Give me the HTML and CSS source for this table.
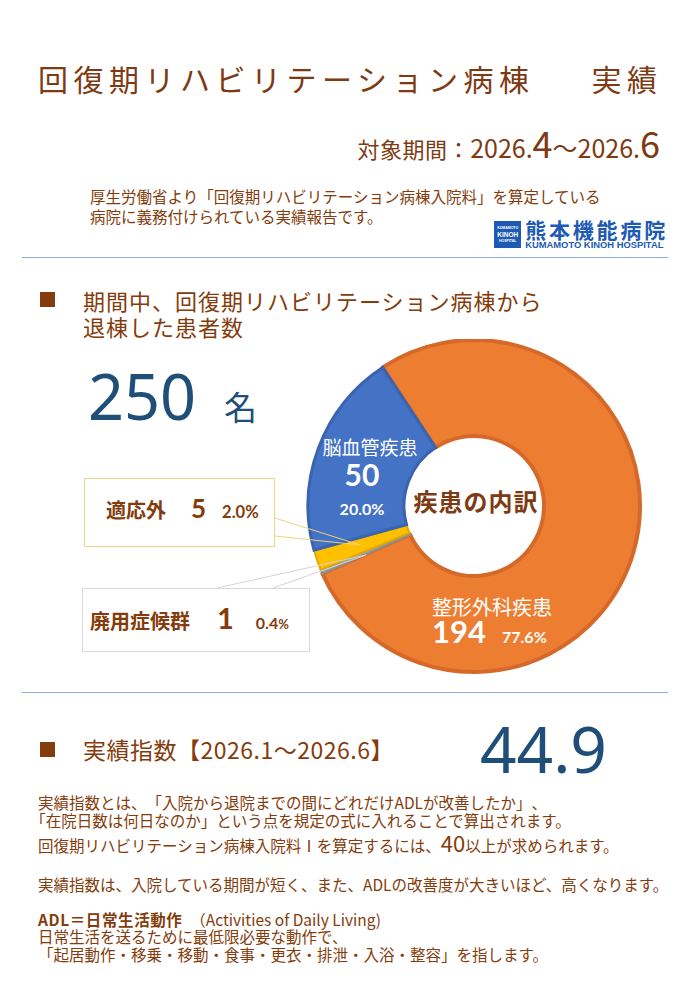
FILE: index.html
```html
<!DOCTYPE html>
<html lang="ja">
<head>
<meta charset="utf-8">
<title>回復期リハビリテーション病棟 実績</title>
<link rel="stylesheet" href="styles.css">
</head>
<body>
<div class="page">
  <header class="header">
    <h1 class="title">回復期リハビリテーション病棟<span class="title-gap"></span>実績</h1>
    <p class="period">対象期間：<span class="num">2026.</span><span class="big">4</span><span class="num">～2026.</span><span class="big">6</span></p>
    <p class="intro">厚生労働省より「回復期リハビリテーション病棟入院料」を算定している<br>病院に義務付けられている実績報告です。</p>
    <div class="logo-row">
      <div class="logo">
        <div class="logo-mark"><span class="lm-s">KUMAMOTO</span><span class="lm-b">KINOH</span><span class="lm-s">HOSPITAL</span></div>
        <div class="logo-text"><span class="logo-jp">熊本機能病院</span><span class="logo-en">KUMAMOTO KINOH HOSPITAL</span></div>
      </div>
    </div>
  </header>

  <div class="rule"></div>

  <section class="sec1">
    <h2 class="sec-head"><span class="bullet"></span><span class="sec-text">期間中、回復期リハビリテーション病棟から<br>退棟した患者数</span></h2>
    <div class="chart">
      <p class="total"><span class="total-num">250</span><span class="total-unit">名</span></p>
      <svg class="donut" width="692" height="352" viewBox="0 0 692 352" xmlns="http://www.w3.org/2000/svg">
        <path class="s-orange" d="M382.6,28.4 A166,166 0 1 1 322.4,234.6 L410.1,195.5 A70,70 0 1 0 435.5,108.6 Z"/>
        <path class="s-gray" d="M322.4,234.6 A166,166 0 0 1 320.7,230.8 L409.4,193.9 A70,70 0 0 0 410.1,195.5 Z"/>
        <path class="s-yellow" d="M320.7,230.8 A166,166 0 0 1 314.0,211.1 L406.5,185.6 A70,70 0 0 0 409.4,193.9 Z"/>
        <path class="s-blue" d="M314.0,211.1 A166,166 0 0 1 382.6,28.4 L435.5,108.6 A70,70 0 0 0 406.5,185.6 Z"/>
        <line class="lead-y" x1="275" y1="179" x2="360" y2="206"/>
        <line class="lead-y" x1="275" y1="197" x2="360" y2="206"/>
        <line class="lead-g" x1="217" y1="249" x2="366" y2="216"/>
        <line class="lead-g" x1="273" y1="249" x2="366" y2="216"/>
        <text class="lbl-jp" x="370" y="116" text-anchor="middle">脳血管疾患</text>
        <text class="lbl-num" x="362" y="147" text-anchor="middle">50</text>
        <text class="lbl-pct" x="362" y="176" text-anchor="middle">20.0%</text>
        <text class="lbl-center" x="476" y="172" text-anchor="middle">疾患の内訳</text>
        <text class="lbl-jp lbl-jp-l" x="432" y="276">整形外科疾患</text>
        <text class="lbl-num lbl-num-l" x="432" y="304">194</text>
        <text class="lbl-pct" x="502" y="304">77.6%</text>
      </svg>
      <div class="callout callout-a">
        <span class="co-label">適応外</span><span class="co-num co-num-a">5</span><span class="co-pct">2.0%</span>
      </div>
      <div class="callout callout-b">
        <span class="co-label">廃用症候群</span><span class="co-num co-num-b">1</span><span class="co-pct co-pct-b">0.4<small>%</small></span>
      </div>
    </div>
  </section>

  <div class="rule"></div>

  <section class="sec2">
    <div class="index-row">
      <h2 class="sec-head sec-head-2"><span class="bullet bullet-2"></span><span class="sec-text">実績指数【2026.1～2026.6】</span></h2>
      <div class="index-num">44.9</div>
    </div>
    <div class="body-text">
      <p class="p1">実績指数とは、「入院から退院までの間にどれだけADLが改善したか」、<br><span class="lead-br">「</span>在院日数は何日なのか」という点を規定の式に入れることで算出されます。</p>
      <p class="p2">回復期リハビリテーション病棟入院料Ⅰを算定するには、<span class="forty">40</span>以上が求められます。</p>
      <p class="p3">実績指数は、入院している期間が短く、また、ADLの改善度が大きいほど、高くなります。</p>
      <p class="p4"><b>ADL＝日常生活動作</b>　（Activities of Daily Living)<br>日常生活を送るために最低限必要な動作で、<br>「起居動作・移乗・移動・食事・更衣・排泄・入浴・整容」を指します。</p>
    </div>
  </section>
</div>
</body>
</html>
```

FILE: styles.css
```css
* { box-sizing: border-box; margin: 0; padding: 0; }

body {
  margin: 0;
  background: #ffffff;
  font-family: "Noto Sans CJK JP", "Noto Sans", sans-serif;
  color: #843c0c;
}

.page { width: 692px; }

.header { padding-top: 60px; }

.title {
  font-size: 30px;
  line-height: 36px;
  font-weight: 400;
  letter-spacing: 5.5px;
  padding-left: 38px;
  color: #7e3a12;
  white-space: nowrap;
}
.title-gap { display: inline-block; width: 57px; }

.period {
  margin-top: 28px;
  text-align: right;
  padding-right: 32px;
  font-size: 22px;
  line-height: 40px;
  letter-spacing: 0.5px;
  color: #7e3a12;
}
.period .num { font-size: 25px; letter-spacing: 0; }
.period .big { font-size: 36px; line-height: 1; letter-spacing: 0; }

.intro {
  margin-top: 18px;
  padding-left: 90px;
  font-size: 15.5px;
  line-height: 20px;
  color: #843c0c;
}

.logo-row {
  display: flex;
  justify-content: flex-end;
  padding-right: 24px;
  margin-top: -7px;
}
.logo { display: flex; align-items: flex-start; gap: 4px; }
.logo-mark {
  width: 27px;
  height: 27px;
  margin-top: 2px;
  background: #1d5ab4;
  color: #fff;
  display: flex;
  flex-direction: column;
  align-items: center;
  justify-content: center;
  font-family: "Liberation Sans", Arial, sans-serif;
  font-weight: 700;
}
.lm-s { font-size: 3.5px; line-height: 5px; }
.lm-b { font-size: 6.5px; line-height: 8px; }
.logo-text { display: flex; flex-direction: column; }
.logo-jp {
  font-size: 21px;
  line-height: 21px;
  font-weight: 700;
  letter-spacing: 2.8px;
  color: #1d5ab4;
}
.logo-en {
  font-family: "Liberation Sans", Arial, sans-serif;
  font-size: 9.4px;
  line-height: 10px;
  font-weight: 700;
  color: #1d5ab4;
}

.rule {
  height: 1px;
  background: #8faadc;
  margin: 7px 24px 0 22px;
}

.sec1 { margin-top: 29px; }

.sec-head {
  display: flex;
  align-items: flex-start;
  padding-left: 40px;
  font-weight: 400;
  font-size: 22px;
  line-height: 26px;
  letter-spacing: 1px;
  color: #843c0c;
}
.bullet {
  flex: none;
  width: 15px;
  height: 15px;
  background: #843c0c;
  margin-top: 5px;
  margin-right: 28px;
}

.chart {
  position: relative;
  height: 346px;
}
.total {
  padding-top: 25px;
  padding-left: 88px;
  color: #1f4e79;
  display: flex;
  align-items: baseline;
}
.total-num {
  font-family: "Noto Sans", sans-serif;
  font-size: 63px;
  line-height: 63px;
}
.total-unit {
  font-size: 33px;
  margin-left: 28px;
}

.donut { position: absolute; left: 0; top: 0; }
.s-orange { fill: #ed7d31; stroke: #d5692a; stroke-width: 4; stroke-linejoin: round; }
.s-blue { fill: #4472c4; stroke: #3a63b0; stroke-width: 3; }
.s-yellow { fill: #ffc000; stroke: #e2a800; stroke-width: 2; }
.s-gray { fill: #a5a5a5; stroke: #8f8f8f; stroke-width: 2; }
.lead-y { stroke: #f2d27c; stroke-width: 1; }
.lead-g { stroke: #d4d4d4; stroke-width: 1; }

.lbl-jp {
  font-family: "Noto Sans CJK JP", sans-serif;
  font-size: 19px;
  fill: #ffffff;
}
.lbl-jp-l { font-size: 20px; }
.lbl-num {
  font-family: "Lato", "Noto Sans", sans-serif;
  font-weight: 700;
  font-size: 30px;
  fill: #ffffff;
}
.lbl-num-l { font-size: 31px; }
.lbl-pct {
  font-family: "Lato", "Noto Sans", sans-serif;
  font-weight: 700;
  font-size: 16px;
  fill: #ffffff;
}
.lbl-center {
  font-family: "Noto Sans CJK JP", sans-serif;
  font-weight: 700;
  font-size: 24px;
  letter-spacing: 1px;
  fill: #7e3a12;
}

.callout {
  position: absolute;
  background: #ffffff;
  display: flex;
  align-items: baseline;
  color: #843c0c;
  font-weight: 700;
}
.callout-a {
  left: 84px;
  top: 139px;
  width: 191px;
  height: 69px;
  border: 1px solid #f2d48a;
  padding: 15px 0 0 21px;
}
.callout-b {
  left: 82px;
  top: 249px;
  width: 228px;
  height: 64px;
  border: 1px solid #d9d9d9;
  padding: 15px 0 0 7px;
}
.co-label { font-size: 20px; line-height: 28px; }
.co-num {
  font-family: "Lato", "Noto Sans", sans-serif;
  font-size: 26px;
  line-height: 28px;
}
.co-num-a { margin-left: 25px; }
.co-num-b { margin-left: 27px; font-size: 29px; }
.co-pct {
  font-family: "Lato", "Noto Sans", sans-serif;
  font-size: 16.5px;
  margin-left: 16px;
}
.co-pct-b { margin-left: 22px; font-size: 16px; }
.co-pct-b small { font-size: 13px; }

.sec2 { padding-bottom: 20px; }
.index-row {
  display: grid;
  grid-template-columns: 480px auto;
  align-items: center;
  margin-top: 24px;
}
.sec-head-2 {
  font-size: 23px;
  line-height: 28px;
  letter-spacing: 0.5px;
}
.bullet-2 { margin-top: 7px; }
.index-num {
  font-family: "Noto Sans", sans-serif;
  font-size: 64px;
  line-height: 64px;
  color: #1f4e79;
}

.body-text {
  margin-top: 13px;
  padding-left: 38px;
  font-size: 15.5px;
  line-height: 17.5px;
  color: #843c0c;
}
.p1 { text-spacing-trim: space-all; }
.lead-br { margin-left: -0.5em; }
.p2 { margin-top: 2px; line-height: 22px; }
.forty { font-size: 22px; line-height: 1; }
.p3 { margin-top: 20px; }
.p4 { margin-top: 17px; }
.p4 b { font-weight: 700; letter-spacing: 0.6px; }
```
